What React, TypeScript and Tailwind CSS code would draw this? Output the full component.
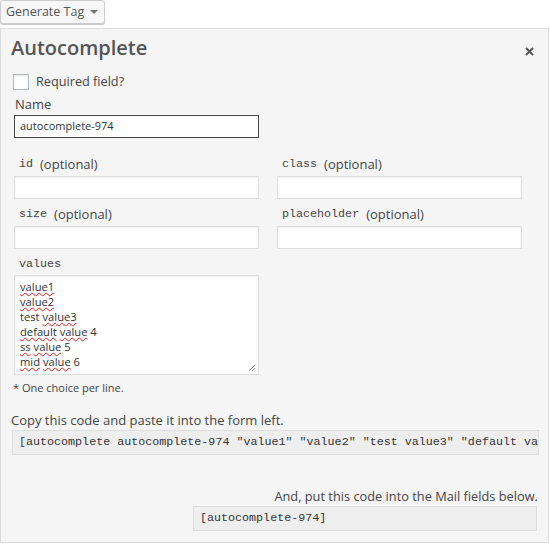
import React from "react";

const mono = "font-['Liberation_Mono','DejaVu_Sans_Mono',monospace]";

function Squiggle({ children }: { children: React.ReactNode }) {
  return (
    <span className="underline decoration-wavy decoration-[#e02020] decoration-1 underline-offset-[1px]">
      {children}
    </span>
  );
}

function Field({ name }: { name: string }) {
  return (
    <div className="flex flex-col">
      <div className="h-[20px] flex items-center pl-[5px] text-[13px] text-[#444]">
        <span className={`${mono} text-[11.7px] text-[#444]`}>{name}</span>
        <span className="ml-[7px]">(optional)</span>
      </div>
      <div className="mt-[1px] h-[23px] w-[245px] border border-[#ddd] bg-white shadow-[inset_0_1px_2px_rgba(0,0,0,0.07)]" />
    </div>
  );
}

export default function App() {
  return (
    <div className="w-[550px] h-[545px] bg-white font-['Open_Sans','Liberation_Sans',sans-serif] text-[#444] overflow-hidden">
      {/* Generate Tag button */}
      <div className="flex">
        <button className="h-[24px] w-[105px] flex items-center pl-[5px] gap-[6px] rounded-[3px] border border-[#ccc] bg-[#f7f7f7] text-[12.5px] text-[#555] shadow-[0_1px_0_#ccc]">
          Generate Tag
          <span className="w-0 h-0 border-l-[4px] border-r-[4px] border-t-[4px] border-l-transparent border-r-transparent border-t-[#777]" />
        </button>
      </div>

      {/* Panel */}
      <div className="mt-[4px] w-[549px] h-[515px] border border-[#dcdcdc] bg-[#f5f5f5] pl-[13px] pr-[10px]">
        <div className="flex items-start justify-between pt-[6px]">
          <h2 className="text-[20px] leading-[26px] font-semibold text-[#555] -ml-[3px]">Autocomplete</h2>
          <svg className="mt-[12px] mr-[4px]" width="9" height="9" viewBox="0 0 9 9">
            <path d="M1 1 L8 8 M8 1 L1 8" stroke="#555" strokeWidth="2" />
          </svg>
        </div>

        <div className="mt-[13px] -ml-px flex items-center h-[16px]">
          <span className="w-[16px] h-[16px] border border-[#b4b9be] bg-white shadow-[inset_0_1px_2px_rgba(0,0,0,0.1)]" />
          <span className="ml-[7px] text-[12.7px]">Required field?</span>
        </div>

        <div className="mt-[6px] h-[18px] flex items-center text-[13px] pl-px">Name</div>
        <div className="mt-[1px] h-[23px] w-[245px] border border-[#444] bg-white flex items-center pl-[5px] text-[11px] text-[#333]">
          autocomplete-974
        </div>

        <div className="mt-[17px] grid grid-cols-[245px_244px] gap-x-[18px] gap-y-[6px]">
          <Field name="id" />
          <Field name="class" />
          <Field name="size" />
          <Field name="placeholder" />
        </div>

        <div className="mt-[6px]">
          <div className="h-[20px] flex items-center pl-[5px]">
            <span className={`${mono} text-[11.7px] text-[#444]`}>values</span>
          </div>
          <div className="relative h-[100px] w-[245px] border border-[#ddd] bg-white shadow-[inset_0_1px_2px_rgba(0,0,0,0.07)] pl-[5px] pt-[3px] text-[11.2px] leading-[15px] text-[#333]">
            <div><Squiggle>value1</Squiggle></div>
            <div><Squiggle>value2</Squiggle></div>
            <div>test <Squiggle>value3</Squiggle></div>
            <div><Squiggle>default</Squiggle> <Squiggle>value</Squiggle> 4</div>
            <div><Squiggle>ss</Squiggle> <Squiggle>value</Squiggle> 5</div>
            <div><Squiggle>mid</Squiggle> <Squiggle>value</Squiggle> 6</div>
            <svg className="absolute right-[2px] bottom-[2px]" width="8" height="8" viewBox="0 0 8 8">
              <path d="M1 7 L7 1 M4 7 L7 4" stroke="#888" strokeWidth="1" />
            </svg>
          </div>
        </div>

        <div className="mt-[5px] -ml-px text-[11px] leading-[16px] text-[#444]">* One choice per line.</div>

        <div className="mt-[15px] text-[13px] leading-[18px] -ml-[3px]">Copy this code and paste it into the form left.</div>
        <div className={`mt-[1px] -ml-[2px] h-[25px] w-[527px] border border-[#ddd] bg-[#eee] flex items-center pl-[6px] overflow-hidden whitespace-nowrap ${mono} text-[11.7px] text-[#333]`}>
          [autocomplete autocomplete-974 "value1" "value2" "test value3" "default value 4" "ss value 5" "mid value 6"]
        </div>

        <div className="mt-[32px] text-right text-[12.8px] leading-[18px]">And, put this code into the Mail fields below.</div>
        <div className="flex justify-end">
          <div className={`mt-[1px] mr-px h-[25px] w-[344px] border border-[#ddd] bg-[#eee] flex items-center pl-[6px] whitespace-nowrap ${mono} text-[11.7px] text-[#333]`}>
            [autocomplete-974]
          </div>
        </div>
      </div>
    </div>
  );
}
